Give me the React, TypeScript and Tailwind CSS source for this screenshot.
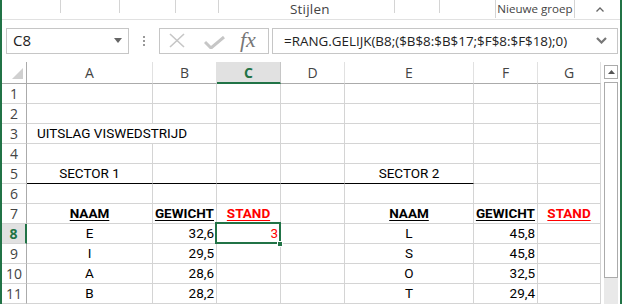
import React from 'react';

const ui = { fontFamily: '"Open Sans", "Noto Sans", sans-serif' };
const cell = { fontFamily: 'Roboto, "Liberation Sans", sans-serif' };

const cols = [
  { key: 'A', w: 'w-[126px]' },
  { key: 'B', w: 'w-[64px]' },
  { key: 'C', w: 'w-[64px]' },
  { key: 'D', w: 'w-[64px]' },
  { key: 'E', w: 'w-[129px]' },
  { key: 'F', w: 'w-[64px]' },
  { key: 'G', w: 'w-[63px]' },
];

type Cell = { text?: string; align?: 'left' | 'center' | 'right'; kind?: 'head' | 'red' | 'redval'; indent?: boolean };

const data: Record<number, Record<string, Cell>> = {
  3: { A: { text: 'UITSLAG VISWEDSTRIJD', align: 'left', indent: true } },
  5: { A: { text: 'SECTOR 1', align: 'center' }, E: { text: 'SECTOR 2', align: 'center' } },
  7: {
    A: { text: 'NAAM', align: 'center', kind: 'head' },
    B: { text: 'GEWICHT', align: 'right', kind: 'head' },
    C: { text: 'STAND', align: 'center', kind: 'red' },
    E: { text: 'NAAM', align: 'center', kind: 'head' },
    F: { text: 'GEWICHT', align: 'right', kind: 'head' },
    G: { text: 'STAND', align: 'center', kind: 'red' },
  },
  8: { A: { text: 'E', align: 'center' }, B: { text: '32,6', align: 'right' }, C: { text: '3', align: 'right', kind: 'redval' }, E: { text: 'L', align: 'center' }, F: { text: '45,8', align: 'right' } },
  9: { A: { text: 'I', align: 'center' }, B: { text: '29,5', align: 'right' }, E: { text: 'S', align: 'center' }, F: { text: '45,8', align: 'right' } },
  10: { A: { text: 'A', align: 'center' }, B: { text: '28,6', align: 'right' }, E: { text: 'O', align: 'center' }, F: { text: '32,5', align: 'right' } },
  11: { A: { text: 'B', align: 'center' }, B: { text: '28,2', align: 'right' }, E: { text: 'T', align: 'center' }, F: { text: '29,4', align: 'right' } },
};

const Sep = ({ h = 'h-[13px]' }: { h?: string }) => <div className={`w-px ${h} bg-[#d4d4d4] self-start`} />;

const Ribbon = () => (
  <div className="h-[20px] flex items-start border-b border-[#e1e1e1] text-[#444]" style={ui}>
    <div className="w-[58px]" />
    <Sep />
    <div className="w-[58px]" />
    <Sep />
    <div className="w-[55px]" />
    <Sep />
    <div className="w-[42px]" />
    <Sep />
    <div className="w-[175px] pl-[71px] pt-[1px] leading-[16px] text-[13.5px] tracking-[0.2px]">Stijlen</div>
    <Sep />
    <div className="w-[44px]" />
    <Sep />
    <div className="w-[55px]" />
    <Sep h="h-[18px]" />
    <div className="w-[78px] text-center pt-[1px] leading-[16px] text-[11.6px] whitespace-nowrap">Nieuwe groep</div>
    <Sep h="h-[18px]" />
    <div className="flex-1 flex justify-end pr-[16px] pt-[7px]">
      <svg width="8" height="5" viewBox="0 0 8 5"><path d="M0.5 4.5 L4 1 L7.5 4.5" fill="none" stroke="#666" strokeWidth="1.3" /></svg>
    </div>
  </div>
);

const FormulaBar = () => (
  <div className="h-[43px] flex items-start pt-[8px]" style={ui}>
    <div className="ml-[4px] w-[123px] h-[26px] border border-[#c6c6c6] flex items-center justify-between pl-[6px] pr-[6px] text-[15px] text-[#222]">
      <span>C8</span>
      <svg width="8" height="5" viewBox="0 0 8 5"><path d="M0 0 L8 0 L4 5 Z" fill="#666" /></svg>
    </div>
    <div className="w-[30px] h-[26px] flex flex-col items-center justify-center gap-[2px]">
      <div className="w-[2px] h-[2px] bg-[#999]" />
      <div className="w-[2px] h-[2px] bg-[#999]" />
      <div className="w-[2px] h-[2px] bg-[#999]" />
    </div>
    <div className="w-[110px] h-[26px] border border-[#c6c6c6] flex items-center">
      <svg className="ml-[9px]" width="16" height="15" viewBox="0 0 16 15"><path d="M1 1 L15 14 M15 1 L1 14" stroke="#c6c6c6" strokeWidth="1.6" /></svg>
      <svg className="ml-[19px] mt-[3px]" width="21" height="13" viewBox="0 0 21 13"><path d="M1 6 L7 12 L20 1" fill="none" stroke="#c6c6c6" strokeWidth="3" /></svg>
      <span className="ml-[15px] text-[22px] leading-none italic text-[#777] -mt-[2px]" style={{ fontFamily: '"Liberation Serif", serif' }}>fx</span>
    </div>
    <div className="ml-[3px] w-[346px] h-[26px] border border-[#c6c6c6] flex items-center justify-between pl-[11px] pr-[10px] text-[13.4px] text-[#222]">
      <span className="whitespace-nowrap">=RANG.GELIJK(B8;($B$8:$B$17;$F$8:$F$18);0)</span>
      <svg width="11" height="7" viewBox="0 0 11 7"><path d="M1 1 L5.5 5.5 L10 1" fill="none" stroke="#777" strokeWidth="2.2" /></svg>
    </div>
  </div>
);

const HeaderRow = () => (
  <div className="h-[22px] flex" style={ui}>
    <div className="w-[25px] h-[22px] border-r border-b border-[#ababab] flex items-end justify-end pr-[3px] pb-[4px]">
      <svg width="11" height="11" viewBox="0 0 11 11"><path d="M11 0 L11 11 L0 11 Z" fill="#d0d0d0" /></svg>
    </div>
    {cols.map((c) =>
      c.key === 'C' ? (
        <div key={c.key} className={`${c.w} h-[22px] bg-[#e1e1e1] border-r border-[#c6c6c6] border-b-2 border-b-[#217346] flex items-center justify-center text-[14px] font-bold text-[#217346]`}>
          {c.key}
        </div>
      ) : (
        <div key={c.key} className={`${c.w} h-[22px] border-r border-[#e1e1e1] border-b border-b-[#ababab] flex items-center justify-center text-[14px] text-[#444]`}>
          {c.key}
        </div>
      )
    )}
  </div>
);

const textClass = (c?: Cell) => {
  if (!c) return '';
  if (c.kind === 'head') return 'font-bold underline underline-offset-[2px] decoration-[1px] text-black';
  if (c.kind === 'red') return 'font-bold underline underline-offset-[2px] decoration-[1px] text-[#ff0000]';
  if (c.kind === 'redval') return 'text-[#ff0000]';
  return 'text-black';
};

const BodyRow = ({ r }: { r: number }) => {
  const row = data[r] || {};
  const selected = r === 8;
  return (
    <div className="h-[20px] flex">
      <div
        className={`w-[25px] h-[20px] border-b border-[#d4d4d4] flex items-center justify-center text-[14px] ${selected ? 'bg-[#e1e1e1] font-bold text-[#217346] border-r-2 border-r-[#217346]' : 'text-[#444] border-r border-r-[#ababab]'}`}
        style={ui}
      >
        {r}
      </div>
      {cols.map((c) => {
        const v = row[c.key];
        const noRight = r === 3 && c.key === 'A';
        const blackBottom = r === 5 && ['A', 'B', 'C', 'D', 'E'].includes(c.key);
        const align = v?.align === 'right' ? 'justify-end pr-[2px]' : v?.align === 'center' ? 'justify-center' : 'justify-start';
        return (
          <div
            key={c.key}
            className={`${c.w} h-[20px] relative flex items-center text-[13.5px] whitespace-nowrap ${align} ${noRight ? '' : 'border-r border-r-[#d4d4d4]'} ${blackBottom ? 'border-b border-b-black' : 'border-b border-b-[#d4d4d4]'}`}
            style={cell}
          >
            {v?.text && (
              <span className={`${textClass(v)} ${v.indent ? 'pl-[10px]' : ''} relative z-10`}>{v.text}</span>
            )}
            {selected && c.key === 'C' && (
              <>
                <div className="absolute -left-[2px] -top-[2px] w-[66px] h-[22px] border-2 border-[#217346] z-20" />
                <div className="absolute -right-[3px] -bottom-[4px] w-[6px] h-[6px] bg-[#217346] border border-white z-30" />
              </>
            )}
          </div>
        );
      })}
    </div>
  );
};

const Scrollbar = () => (
  <div className="w-[19px] flex flex-col">
    <div className="h-[22px] flex items-start pt-[3px] pl-[3px]">
      <div className="w-[14px] h-[14px] border border-[#ababab] bg-white flex items-center justify-center">
        <svg width="7" height="4" viewBox="0 0 7 4"><path d="M0 4 L3.5 0 L7 4 Z" fill="#555" /></svg>
      </div>
    </div>
    <div className="pl-[3px] flex-1 flex flex-col">
      <div className="w-[14px] h-[196px] border border-[#ababab] bg-white -mt-[2px]" />
      <div className="w-[14px] flex-1 bg-[#e9e9e9]" />
    </div>
  </div>
);

export default function App() {
  return (
    <div className="w-[622px] h-[304px] overflow-hidden bg-white border-x-2 border-[#217346] flex flex-col">
      <Ribbon />
      <FormulaBar />
      <div className="flex">
        <div className="flex flex-col">
          <HeaderRow />
          {[1, 2, 3, 4, 5, 6, 7, 8, 9, 10, 11].map((r) => (
            <BodyRow key={r} r={r} />
          ))}
        </div>
        <Scrollbar />
      </div>
    </div>
  );
}
